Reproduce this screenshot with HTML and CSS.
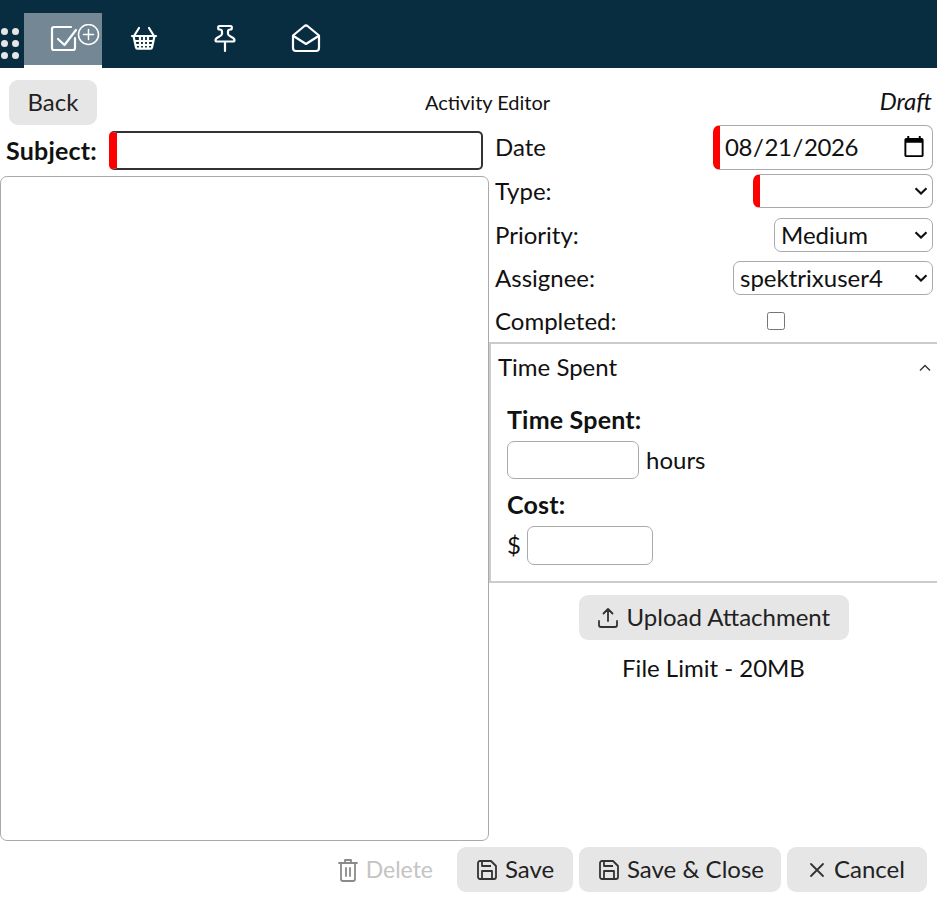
FILE: index.html
```html
<!DOCTYPE html>
<html lang="en">
<head>
<meta charset="utf-8">
<title>Activity Editor</title>
<link rel="stylesheet" href="styles.css">
</head>
<body>
<header class="topbar">
  <div class="grip"><i></i><i></i><i></i><i></i><i></i><i></i></div>
  <nav class="tabs">
    <a class="tab tab-active">
      <svg width="50" height="30" viewBox="0 0 50 30" fill="none" stroke="#fff" stroke-linecap="round" stroke-linejoin="round"><path stroke-width="2.200" d="M21 3H4a2 2 0 0 0-2 2v19a2 2 0 0 0 2 2h19a2 2 0 0 0 2-2V14"/><path stroke-width="2.200" d="M8 15l6.500 6L26 6"/><circle stroke-width="1.500" cx="38.500" cy="10.500" r="10"/><path stroke-width="1.500" d="M38.500 5.500v10M33.500 10.500h10"/></svg>
    </a>
    <a class="tab"><svg width="32" height="32" viewBox="128 22 32 32" fill="none" stroke="#fff" stroke-width="2.200" stroke-linecap="round" stroke-linejoin="round"><path d="M132 36h24M133.500 36l2.500 11.500a1.500 1.500 0 0 0 1.500 1.200h13a1.500 1.500 0 0 0 1.500-1.200l2.500-11.500M134 36l5-8M154 36l-5-8M135 41h18M136 45h16M140 36.500v12M144 36.500v12M148 36.500v12"/></svg></a>
    <a class="tab"><svg width="32" height="32" viewBox="209 22 32 32" fill="none" stroke="#fff" stroke-width="2.200" stroke-linecap="round" stroke-linejoin="round"><path d="M219.500 26h11c1.800 0 1.800 3.500 0 3.500-1.500 0-2.500.5-2.500 2V34c0 2.500 6.500 3 6.500 6 0 1-.5 1.500-1.500 1.500h-16c-1 0-1.500-.5-1.500-1.500 0-3 6.500-3.500 6.500-6v-2.500c0-1.500-1-2-2.500-2-1.800 0-1.800-3.500 0-3.500zM225 42v9"/></svg></a>
    <a class="tab"><svg width="32" height="32" viewBox="290 22 32 32" fill="none" stroke="#fff" stroke-width="2.200" stroke-linecap="round" stroke-linejoin="round"><path d="M293 35.500L304.500 26a2.500 2.500 0 0 1 3 0L319 35.500V48a3 3 0 0 1-3 3h-20a3 3 0 0 1-3-3z"/><path d="M293.500 36l12.500 8 12.500-8"/></svg></a>
  </nav>
</header>

<main class="editor">
  <div class="titlebar">
    <button class="btn btn-back" type="button">Back</button>
    <div class="title">Activity Editor</div>
    <div class="status">Draft</div>
  </div>
  <div class="columns">
    <section class="left">
      <div class="subject-row">
        <label class="subject-label">Subject:</label>
        <input class="subject-input" type="text">
      </div>
      <textarea class="body-text"></textarea>
    </section>
    <section class="right">
      <div class="field field-date"><label>Date</label><input class="ctl date req" type="date" value="2026-08-21"></div>
      <div class="field field-type"><label>Type:</label><select class="ctl sel sel-type req"><option></option></select></div>
      <div class="field field-priority"><label>Priority:</label><select class="ctl sel sel-priority"><option>Medium</option></select></div>
      <div class="field field-assignee"><label>Assignee:</label><select class="ctl sel sel-assignee"><option>spektrixuser4</option></select></div>
      <div class="field field-completed"><label>Completed:</label><span class="check-cell"><input class="check" type="checkbox"></span></div>
      <div class="panel">
        <div class="panel-head"><span>Time Spent</span>
          <svg width="12" height="8" viewBox="0 0 12 8" fill="none" stroke="#333" stroke-width="1.400"><path d="M1 6.500l5-5 5 5"/></svg>
        </div>
        <div class="panel-body">
          <div class="strong">Time Spent:</div>
          <div class="inline inline-hours"><input class="num num-hours" type="text"><span>hours</span></div>
          <div class="strong strong-cost">Cost:</div>
          <div class="inline inline-cost"><span>$</span><input class="num num-cost" type="text"></div>
        </div>
      </div>
      <div class="upload">
        <button class="btn btn-upload" type="button">
          <svg width="22" height="22" viewBox="0 0 22 22" fill="none" stroke="#333" stroke-width="1.800" stroke-linecap="round" stroke-linejoin="round"><path d="M11 14V2M6.500 6.500L11 2l4.500 4.500M2 14v4a2 2 0 0 0 2 2h14a2 2 0 0 0 2-2v-4"/></svg>
          Upload Attachment
        </button>
        <div class="limit">File Limit - 20MB</div>
      </div>
    </section>
  </div>
  <footer class="actions">
    <span class="delete">
      <svg width="20" height="24" viewBox="0 0 20 24" fill="none" stroke="#8a8a8a" stroke-width="1.800" stroke-linecap="round" stroke-linejoin="round"><path d="M1 5h18M7 5V2h6v3M3 5v16a2 2 0 0 0 2 2h10a2 2 0 0 0 2-2V5M8 10v8M12 10v8"/></svg>
      Delete
    </span>
    <button class="btn btn-foot btn-save" type="button"><svg class="ico" width="20" height="20" viewBox="0 0 20 20" fill="none" stroke="#333" stroke-width="1.800" stroke-linejoin="round"><path d="M1 3a2 2 0 0 1 2-2h11l5 5v11a2 2 0 0 1-2 2H3a2 2 0 0 1-2-2z"/><path d="M5 1v5h9M5 19v-8h10v8"/></svg>Save</button>
    <button class="btn btn-foot btn-close" type="button"><svg class="ico" width="20" height="20" viewBox="0 0 20 20" fill="none" stroke="#333" stroke-width="1.800" stroke-linejoin="round"><path d="M1 3a2 2 0 0 1 2-2h11l5 5v11a2 2 0 0 1-2 2H3a2 2 0 0 1-2-2z"/><path d="M5 1v5h9M5 19v-8h10v8"/></svg>Save &amp; Close</button>
    <button class="btn btn-foot btn-cancel" type="button"><svg class="ico" width="18" height="18" viewBox="0 0 18 18" fill="none" stroke="#333" stroke-width="1.800" stroke-linecap="round"><path d="M3 3l12 12M15 3L3 15"/></svg>Cancel</button>
  </footer>
</main>
</body>
</html>
```
FILE: styles.css
```css
* { box-sizing: border-box; }
html, body { margin: 0; padding: 0; }
body {
  font-family: "Lato", "Liberation Sans", sans-serif;
  font-size: 24px;
  line-height: 1.2;
  color: #111;
  background: #fff;
  height: 897px;
  overflow: hidden;
}
.topbar {
  height: 68px;
  background: #082d40;
  display: flex;
  align-items: flex-end;
}
.grip {
  width: 24px;
  height: 31px;
  margin-bottom: 9px;
  padding-left: 1px;
  display: grid;
  grid-template-columns: 7px 7px;
  grid-auto-rows: 7px;
  column-gap: 4px;
  row-gap: 5px;
}
.grip i { width: 7px; height: 7px; border-radius: 50%; background: #e4e6e8; }
.tabs { display: flex; height: 68px; }
.tab {
  width: 81px;
  height: 68px;
  display: flex;
  align-items: center;
  justify-content: center;
  padding: 8px 0 0 3px;
}
.tab-active {
  width: 78px;
  height: 52px;
  margin-top: 13px;
  padding: 0 0 0 24px;
  background: #738894;
  box-shadow: 0 3px 0 #fff;
}
.titlebar {
  display: grid;
  grid-template-columns: 1fr auto 1fr;
  align-items: center;
  padding: 12px 5px 0 9px;
  height: 57px;
}
.title { font-size: 20px; padding-left: 34px; margin-top: -1px; }
.status { font-size: 24px; font-style: italic; text-align: right; margin-top: -2px; }
.btn {
  font: inherit;
  color: #222;
  background: #e6e6e6;
  border: 0;
  border-radius: 9px;
  height: 45px;
  padding: 0;
  display: inline-flex;
  align-items: center;
  white-space: nowrap;
}
.btn-back { width: 88px; justify-content: center; justify-self: start; }
.columns { display: flex; height: 722px; }
.left { width: 489px; flex: none; }
.subject-row {
  display: flex;
  align-items: center;
  height: 39px;
  margin-top: 6px;
  padding-left: 6px;
}
.subject-label { font-weight: 700; font-size: 25px; letter-spacing: .2px; width: 103px; padding-bottom: 1px; }
.subject-input {
  width: 374px;
  height: 39px;
  border: 2px solid #333;
  border-left: 8px solid #f00;
  border-radius: 5px;
  background: #fff;
  outline: 0;
}
.body-text {
  display: block;
  width: 489px;
  height: 665px;
  margin: 6px 0 0;
  border: 1px solid #aaa;
  border-radius: 7px;
  resize: none;
  outline: 0;
}
.right { flex: 1; min-width: 0; padding-left: 1px; }
.field {
  display: flex;
  justify-content: space-between;
  align-items: center;
  padding: 0 4px 0 5px;
}
.field-date { height: 45px; }
.field-type { height: 34px; margin-top: 4px; }
.field-priority { height: 34px; margin-top: 10px; }
.field-assignee { height: 34px; margin-top: 9px; }
.field-completed { height: 34px; margin-top: 9px; }
.ctl {
  font: inherit;
  color: #111;
  background: #fff;
  border: 1px solid #aaa;
  border-radius: 7px;
  height: 34px;
  padding: 0 2px 0 3px;
}
.sel {
  appearance: none;
  padding: 0 22px 0 6px;
  background: #fff url("data:image/svg+xml,%3Csvg xmlns='http://www.w3.org/2000/svg' width='14' height='8' viewBox='0 0 14 8' fill='none' stroke='%23111' stroke-width='2.200'%3E%3Cpath d='M1.500 1.200L7 6.500l5.500-5.300'/%3E%3C/svg%3E") no-repeat right 4px center;
}
.req { border-left: 7px solid #f00; }
.date { width: 220px; height: 45px; padding: 0 4px; letter-spacing: -.4px; }
.sel-type { width: 180px; }
.sel-priority { width: 159px; }
.sel-assignee { width: 200px; }
.check-cell { width: 166px; display: flex; }
.check { width: 18px; height: 18px; margin: 0; }
.panel {
  margin-top: 4px;
  margin-left: -1px;
  height: 241px;
  border: solid #ccc;
  border-width: 2px 0 2px 2px;
}
.panel-head {
  display: flex;
  justify-content: space-between;
  align-items: center;
  height: 48px;
  padding: 0 6px 0 7px;
}
.panel-head span { padding-bottom: 2px; }
.panel-body { padding: 12px 16px 0; }
.strong { font-weight: 700; font-size: 25px; letter-spacing: .2px; line-height: 30px; }
.inline { display: flex; align-items: center; gap: 7px; }
.inline-hours { margin-top: 7px; }
.num {
  height: 38px;
  border: 1px solid #aaa;
  border-radius: 7px;
  background: #fff;
  margin: 0;
}
.num-hours { width: 132px; }
.strong-cost { margin-top: 10px; }
.num-cost { width: 126px; height: 39px; }
.inline-cost { gap: 6px; margin-top: 7px; }
.upload { display: flex; flex-direction: column; align-items: center; margin-top: 12px; }
.btn-upload { width: 270px; padding: 0 18px; gap: 8px; }
.limit { margin-top: 14px; }
.actions {
  display: flex;
  justify-content: flex-end;
  align-items: center;
  gap: 6px;
  padding-right: 10px;
  height: 45px;
}
.delete { color: #c4c4c4; font-size: 23px; display: inline-flex; align-items: center; gap: 8px; margin-right: 18px; }
.btn-foot { padding: 0 0 0 20px; }
.btn-save { width: 116px; }
.btn-close { width: 202px; }
.btn-cancel { padding-left: 21px; width: 140px; }
.ico { margin-right: 8px; }
```
